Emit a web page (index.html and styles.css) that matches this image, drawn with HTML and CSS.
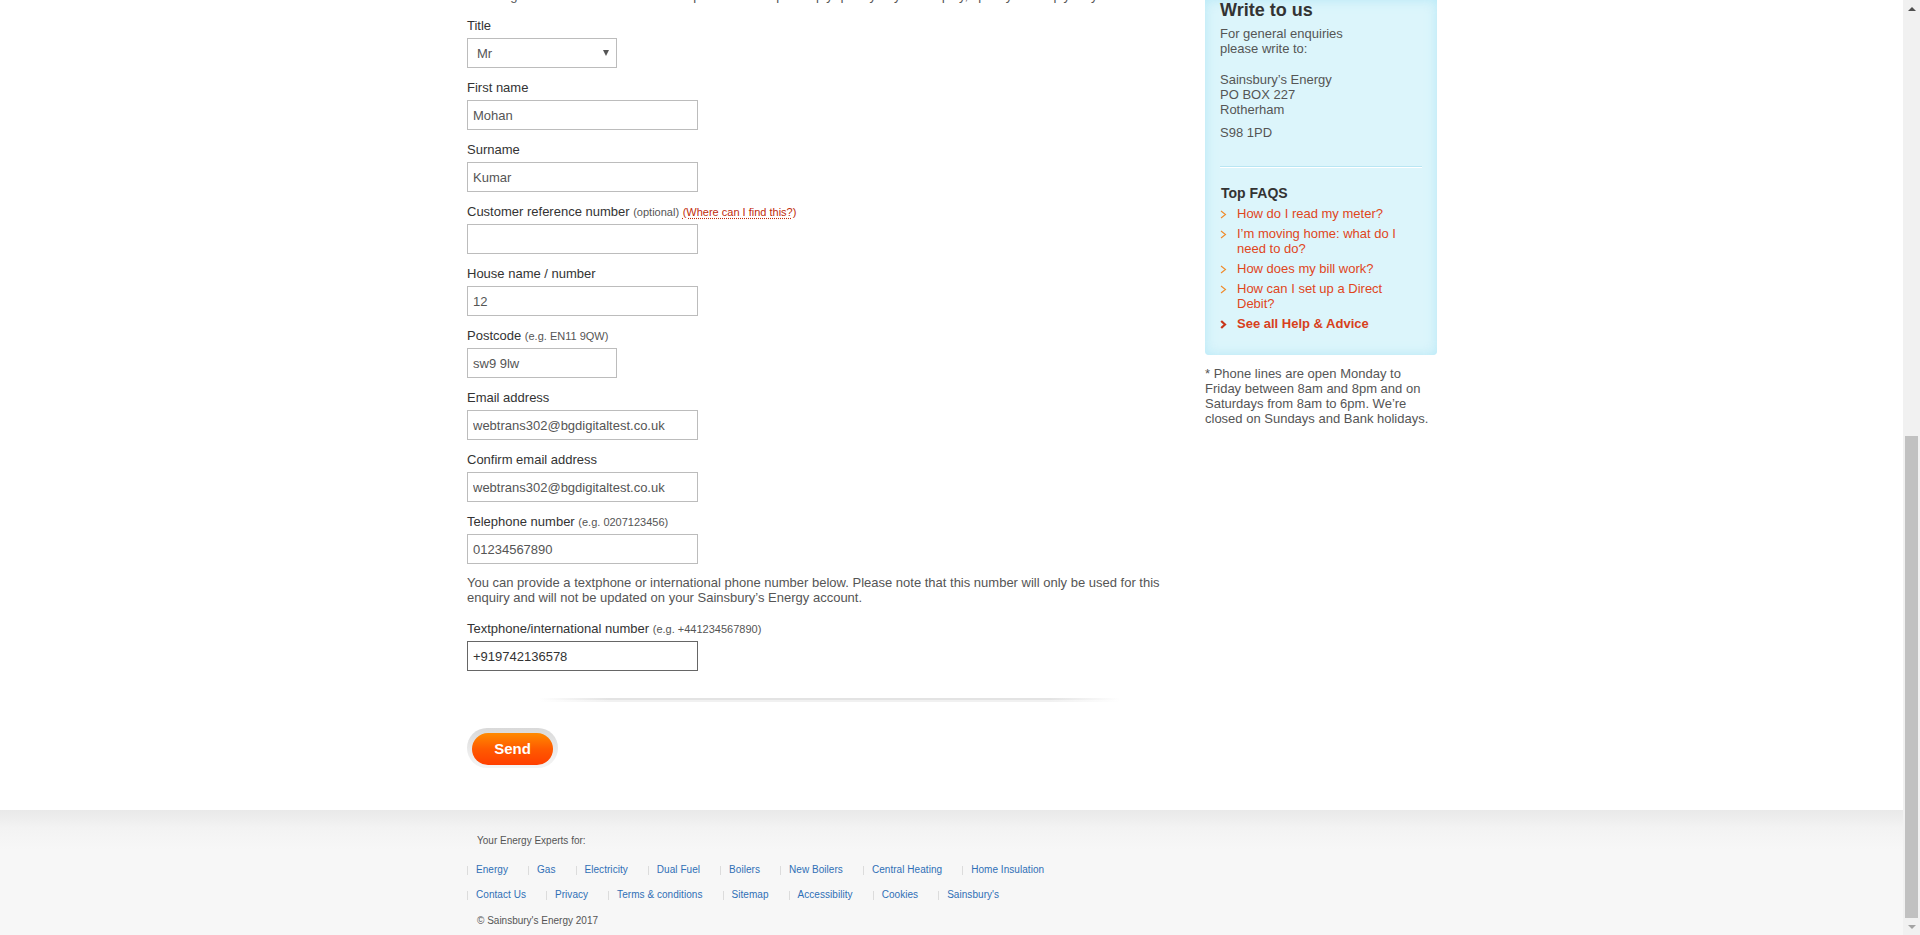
FILE: index.html
```html
<!DOCTYPE html>
<html lang="en">
<head>
<meta charset="utf-8">
<title>Contact us - Sainsbury's Energy</title>
<link rel="stylesheet" href="styles.css">
</head>
<body>
<div class="viewport">
  <div class="page">
    <div class="wrap content">
      <main class="main">
        <p class="intro">Please give us as much information as possible to help us reply quickly to your enquiry, specify as simply as you can.</p>
        <form class="form">
          <div class="field">
            <label class="label" for="title">Title</label>
            <div class="select-wrap">
              <select id="title" class="select">
                <option>Mr</option><option>Mrs</option><option>Miss</option><option>Ms</option><option>Dr</option>
              </select>
            </div>
          </div>
          <div class="field">
            <label class="label" for="first">First name</label>
            <input id="first" class="input" type="text" value="Mohan">
          </div>
          <div class="field">
            <label class="label" for="surname">Surname</label>
            <input id="surname" class="input" type="text" value="Kumar">
          </div>
          <div class="field">
            <label class="label" for="ref">Customer reference number <span class="hint">(optional)</span> <a class="help" href="#">(Where can I find this?)</a></label>
            <input id="ref" class="input" type="text" value="">
          </div>
          <div class="field">
            <label class="label" for="house">House name / number</label>
            <input id="house" class="input" type="text" value="12">
          </div>
          <div class="field">
            <label class="label" for="postcode">Postcode <span class="hint">(e.g. EN11 9QW)</span></label>
            <input id="postcode" class="input input-short" type="text" value="sw9 9lw">
          </div>
          <div class="field">
            <label class="label" for="email">Email address</label>
            <input id="email" class="input" type="text" value="webtrans302@bgdigitaltest.co.uk">
          </div>
          <div class="field">
            <label class="label" for="email2">Confirm email address</label>
            <input id="email2" class="input" type="text" value="webtrans302@bgdigitaltest.co.uk">
          </div>
          <div class="field">
            <label class="label" for="tel">Telephone number <span class="hint">(e.g. 0207123456)</span></label>
            <input id="tel" class="input" type="text" value="01234567890">
          </div>
          <p class="note">You can provide a textphone or international phone number below. Please note that this number will only be used for this enquiry and will not be updated on your Sainsbury’s Energy account.</p>
          <div class="field field-last">
            <label class="label" for="intl">Textphone/international number <span class="hint">(e.g. +441234567890)</span></label>
            <input id="intl" class="input input-focus" type="text" value="+919742136578">
          </div>
          <div class="divider"></div>
          <div class="actions">
            <span class="send-ring"><button type="button" class="send">Send</button></span>
          </div>
        </form>
      </main>
      <aside class="side">
        <div class="side-box">
          <h2 class="side-title">Write to us</h2>
          <p class="side-text">For general enquiries<br>please write to:</p>
          <p class="side-text side-gap">Sainsbury’s Energy<br>PO BOX 227<br>Rotherham</p>
          <p class="side-text side-small-gap">S98 1PD</p>
          <div class="side-rule"></div>
          <h3 class="faq-title">Top FAQS</h3>
          <ul class="faq">
            <li class="faq-item"><svg class="chev" width="7" height="9" viewBox="0 0 7 9"><polyline points="1,1 5.5,4.5 1,8" fill="none" stroke="#f08a2a" stroke-width="1.1"/></svg><a href="#" class="faq-link">How do I read my meter?</a></li>
            <li class="faq-item"><svg class="chev" width="7" height="9" viewBox="0 0 7 9"><polyline points="1,1 5.5,4.5 1,8" fill="none" stroke="#f08a2a" stroke-width="1.1"/></svg><a href="#" class="faq-link">I’m moving home: what do I need to do?</a></li>
            <li class="faq-item"><svg class="chev" width="7" height="9" viewBox="0 0 7 9"><polyline points="1,1 5.5,4.5 1,8" fill="none" stroke="#f08a2a" stroke-width="1.1"/></svg><a href="#" class="faq-link">How does my bill work?</a></li>
            <li class="faq-item"><svg class="chev" width="7" height="9" viewBox="0 0 7 9"><polyline points="1,1 5.5,4.5 1,8" fill="none" stroke="#f08a2a" stroke-width="1.1"/></svg><a href="#" class="faq-link">How can I set up a Direct Debit?</a></li>
            <li class="faq-item"><svg class="chev" width="7" height="9" viewBox="0 0 7 9"><polyline points="1.2,1 5,4.5 1.2,8" fill="none" stroke="#c8361a" stroke-width="2.2"/></svg><a href="#" class="faq-link faq-all">See all Help &amp; Advice</a></li>
          </ul>
        </div>
        <p class="side-note">* Phone lines are open Monday to Friday between 8am and 8pm and on Saturdays from 8am to 6pm. We’re closed on Sundays and Bank holidays.</p>
      </aside>
    </div>
    <footer class="footer">
      <div class="wrap">
        <p class="foot-lead">Your Energy Experts for:</p>
        <ul class="foot-links">
          <li class="foot-item"><a href="#">Energy</a></li>
          <li class="foot-item"><a href="#">Gas</a></li>
          <li class="foot-item"><a href="#">Electricity</a></li>
          <li class="foot-item"><a href="#">Dual Fuel</a></li>
          <li class="foot-item"><a href="#">Boilers</a></li>
          <li class="foot-item"><a href="#">New Boilers</a></li>
          <li class="foot-item"><a href="#">Central Heating</a></li>
          <li class="foot-item"><a href="#">Home Insulation</a></li>
        </ul>
        <ul class="foot-links foot-links-2">
          <li class="foot-item"><a href="#">Contact Us</a></li>
          <li class="foot-item"><a href="#">Privacy</a></li>
          <li class="foot-item"><a href="#">Terms &amp; conditions</a></li>
          <li class="foot-item"><a href="#">Sitemap</a></li>
          <li class="foot-item"><a href="#">Accessibility</a></li>
          <li class="foot-item"><a href="#">Cookies</a></li>
          <li class="foot-item"><a href="#">Sainsbury's</a></li>
        </ul>
        <p class="copy">© Sainsbury's Energy 2017</p>
      </div>
    </footer>
  </div>
  <div class="scrollbar" aria-hidden="true">
    <div class="sb-btn"><span class="sb-up"></span></div>
    <div class="sb-track"></div>
    <div class="sb-thumb"></div>
    <div class="sb-btn"><span class="sb-down"></span></div>
  </div>
</div>
</body>
</html>
```

FILE: styles.css
```css
* { box-sizing: border-box; }
html, body { margin: 0; padding: 0; }
body {
  font-family: "Liberation Sans", Arial, sans-serif;
  font-size: 13px;
  color: #333;
  background: #fff;
  overflow: hidden;
}
a { text-decoration: none; }

.viewport {
  display: flex;
  height: 935px;
  overflow: hidden;
}
.page {
  flex: 1;
  overflow: hidden;
  background: #fff;
}
.wrap {
  width: 970px;
  margin: 0 auto;
  padding-left: 1px;
  box-sizing: content-box;
}

.content {
  display: flex;
  gap: 28px;
  padding-bottom: 42px;
}
.main {
  width: 710px;
  flex-shrink: 0;
}
.intro {
  margin: -12px 0 13px;
  line-height: 15px;
  color: #555;
  white-space: nowrap;
}

.form { margin: 0; }
.field { margin-bottom: 10px; }
.field-last { margin-bottom: 0; }
.label {
  display: block;
  line-height: 18px;
  padding-top: 1px;
  margin-bottom: 3px;
  color: #333;
}
.hint {
  font-size: 11px;
  color: #555;
}
.help {
  font-size: 11px;
  color: #c02a0a;
  text-decoration: underline dotted #c02a0a;
  text-underline-offset: 2px;
}

.input {
  display: block;
  width: 231px;
  height: 30px;
  padding: 0 5px;
  border: 1px solid #bcbcbc;
  border-radius: 0;
  font-family: "Liberation Sans", Arial, sans-serif;
  font-size: 13px;
  color: #555;
  background: #fff;
  outline: none;
}
.input-short { width: 150px; }
.input-focus { border-color: #666; color: #333; }

.select-wrap {
  position: relative;
  width: 150px;
}
.select {
  display: block;
  width: 150px;
  height: 30px;
  padding: 0 9px;
  border: 1px solid #bcbcbc;
  border-radius: 0;
  background: #fff;
  font-family: "Liberation Sans", Arial, sans-serif;
  font-size: 13px;
  color: #555;
  -webkit-appearance: none;
  appearance: none;
  outline: none;
}
.select-wrap::after {
  content: "";
  position: absolute;
  right: 8px;
  top: 12px;
  border-left: 3.5px solid transparent;
  border-right: 3.5px solid transparent;
  border-top: 6px solid #555;
  pointer-events: none;
}

.note {
  margin: 11px 0 14px;
  line-height: 15px;
  color: #555;
}

.divider {
  position: relative;
  margin: 27px 0 0 72px;
  width: 581px;
  height: 2px;
  background: linear-gradient(to right, rgba(225,225,225,0), #e3e3e3 12%, #e3e3e3 88%, rgba(225,225,225,0));
}
.divider::after {
  content: "";
  position: absolute;
  left: 0; right: 0; top: 2px;
  height: 2px;
  background: linear-gradient(to right, rgba(240,240,240,0), #f1f1f1 12%, #f1f1f1 88%, rgba(240,240,240,0));
}

.actions { margin-top: 28px; line-height: 0; }
.send-ring {
  display: inline-block;
  padding: 5px 5px 3px;
  border-radius: 22px;
  background: linear-gradient(#d9d9d9, #eeeeee 70%, #f4f4f4);
}
.send {
  display: block;
  width: 81px;
  height: 32px;
  border: 0;
  border-radius: 16px;
  background: linear-gradient(#ff8a00, #ff5a00 50%, #ff3f00);
  color: #fff;
  font-family: "Liberation Sans", Arial, sans-serif;
  font-weight: bold;
  font-size: 15px;
  line-height: 32px;
  padding: 0;
  cursor: pointer;
}

/* sidebar */
.side {
  width: 232px;
  flex-shrink: 0;
}
.side-box {
  padding: 0 20px 24px 15px;
  background: #dcf5fb;
  box-shadow: inset 0 0 12px rgba(170, 228, 245, 0.75);
  border-radius: 0 0 4px 4px;
}
.side-title {
  margin: 0;
  font-size: 18px;
  line-height: 20px;
  font-weight: bold;
  color: #333;
}
.side-text {
  margin: 6px 0 0;
  line-height: 15px;
  color: #555;
}
.side-gap { margin-top: 16px; }
.side-small-gap { margin-top: 8px; }
.side-rule {
  margin: 26px -5px 0 0;
  height: 2px;
  border-top: 1px solid #b9e6f3;
  border-bottom: 1px solid #fff;
}
.faq-title {
  margin: 16px 0 0 1px;
  font-size: 14px;
  line-height: 18px;
  font-weight: bold;
  color: #333;
}
.faq {
  list-style: none;
  margin: 4px 0 0;
  padding: 0;
}
.faq-item {
  display: flex;
  align-items: flex-start;
  margin-bottom: 5px;
  line-height: 15px;
}
.faq-item:last-child { margin-bottom: 0; }
.chev {
  flex-shrink: 0;
  margin: 4px 10px 0 0;
}
.faq-link { color: #e0461c; }
.faq-all { font-weight: bold; color: #d8401b; }

.side-note {
  margin: 11px 0 0;
  line-height: 15px;
  color: #555;
}

/* footer */
.footer {
  background: linear-gradient(#e9e9e9, #f3f3f3 18px, #f7f7f7 40px);
  padding: 25px 0 30px;
}
.foot-lead {
  margin: 0 0 17px 10px;
  font-size: 10px;
  line-height: 12px;
  color: #555;
}
.foot-links {
  list-style: none;
  display: flex;
  margin: 0 0 13px;
  padding: 0;
}
.foot-links-2 { margin-bottom: 14px; }
.foot-item {
  display: flex;
  align-items: center;
  font-size: 10px;
  line-height: 12px;
  padding-right: 20px;
  letter-spacing: 0.05px;
}
.foot-item::before {
  content: "";
  width: 1px;
  height: 9px;
  background: #dcdcdc;
  margin-right: 8px;
}
.foot-item a { color: #2f6fb6; }
.copy {
  margin: 0 0 0 10px;
  font-size: 10px;
  line-height: 12px;
  color: #555;
}

/* fake scrollbar */
.scrollbar {
  width: 17px;
  flex-shrink: 0;
  background: #f1f1f1;
  display: flex;
  flex-direction: column;
  align-items: center;
}
.sb-btn {
  height: 17px;
  width: 17px;
  display: flex;
  align-items: center;
  justify-content: center;
}
.sb-up {
  border-left: 4px solid transparent;
  border-right: 4px solid transparent;
  border-bottom: 4px solid #505050;
}
.sb-down {
  border-left: 4px solid transparent;
  border-right: 4px solid transparent;
  border-top: 4px solid #a3a3a3;
}
.sb-track { height: 419px; }
.sb-thumb {
  width: 13px;
  height: 482px;
  background: #c1c1c1;
}
```
